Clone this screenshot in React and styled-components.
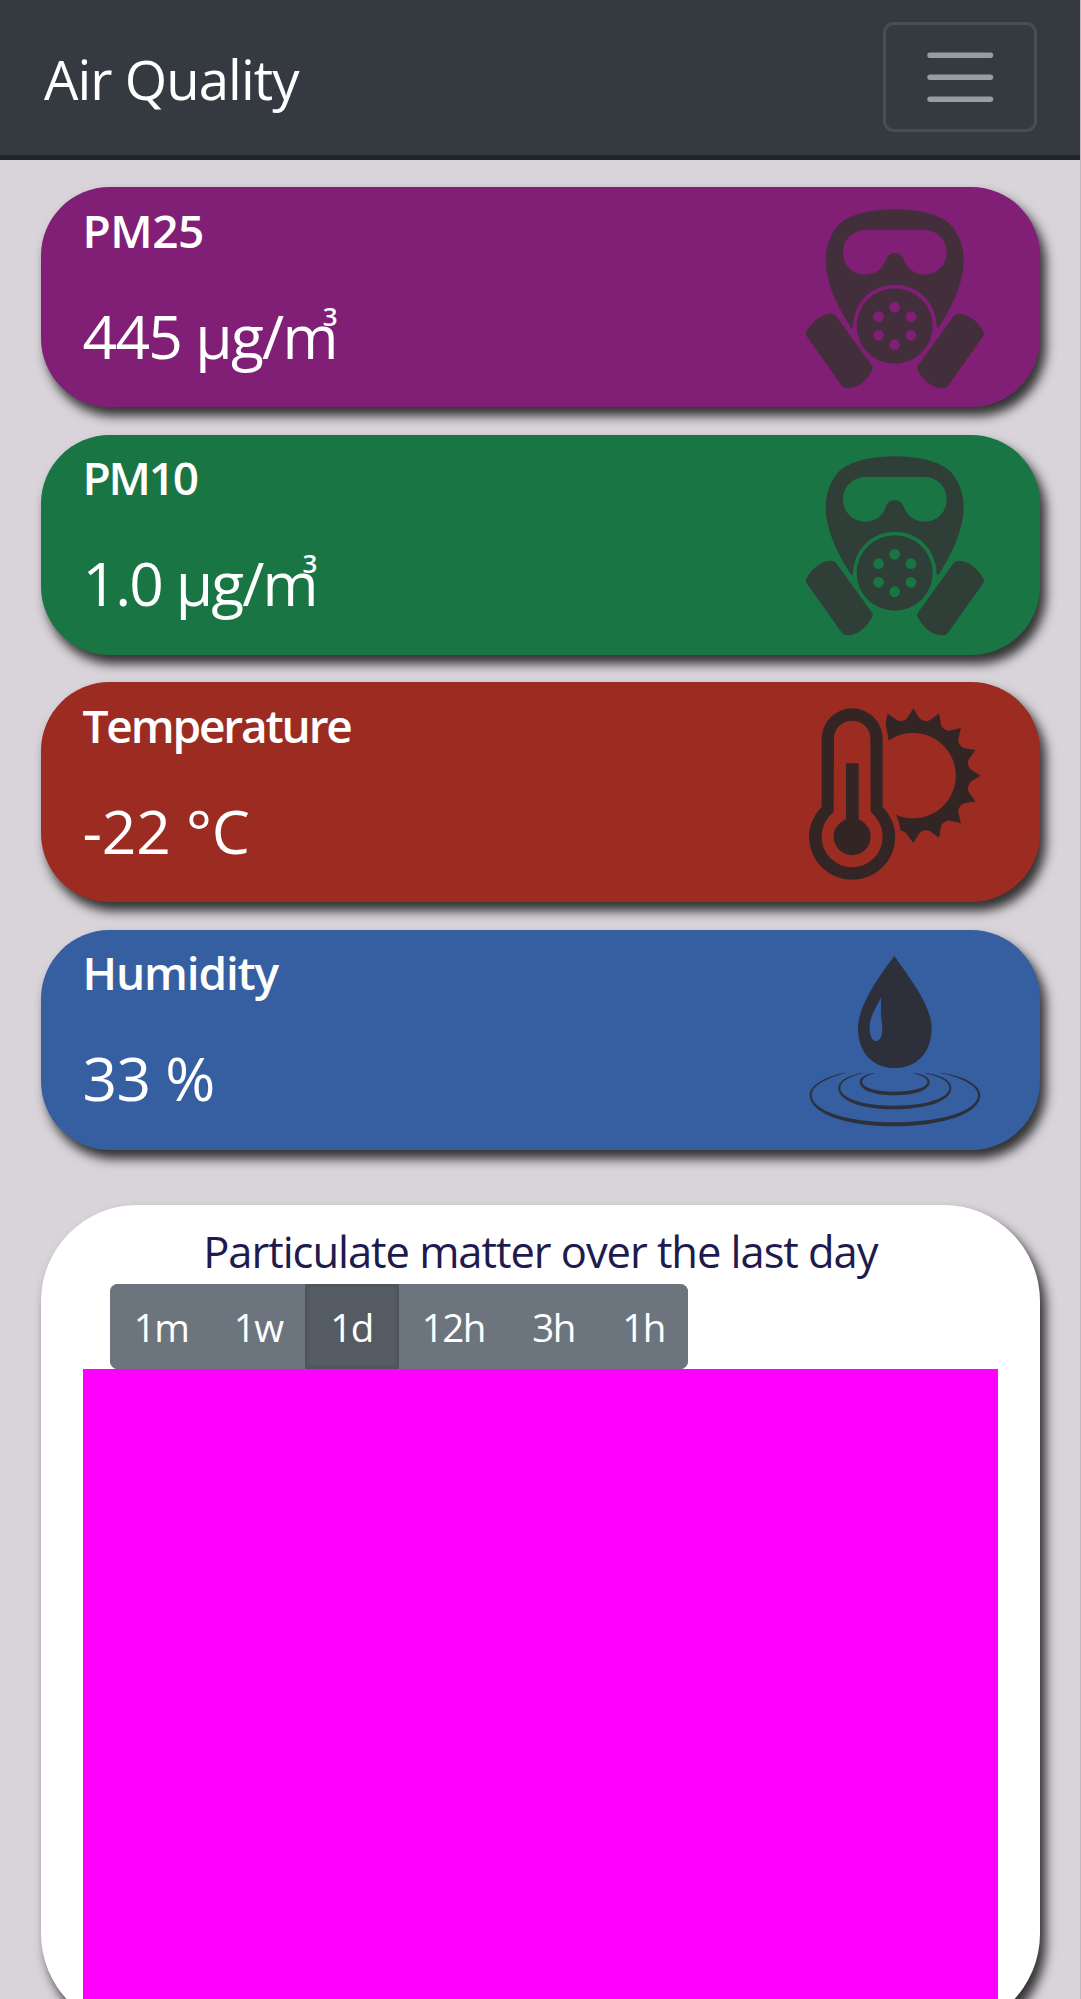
import React from "react";
import styled, { createGlobalStyle } from "styled-components";

const GlobalStyle = createGlobalStyle`
  *, *::before, *::after { box-sizing: border-box; }
  html, body { margin: 0; padding: 0; }
  body {
    background: #d9d4da;
    font-family: "Open Sans", "Noto Sans", sans-serif;
    overflow: hidden;
  }
`;

const Page = styled.div`
  height: 1999px;
  overflow: hidden;
  background: #d9d4da;
  border-right: 1px solid #bdb9be;
`;

const Navbar = styled.header`
  display: flex;
  align-items: center;
  justify-content: space-between;
  height: 159.5px;
  padding: 0 43.5px 0 44px;
  background: #343a40;
  border-bottom: 5.5px solid #212529;
`;

const Brand = styled.div`
  color: #fff;
  font-size: 54.5px;
  line-height: 82px;
  letter-spacing: ${(p) => p.$tracking}px;
  white-space: nowrap;
  padding-top: 3px;
`;

const Toggler = styled.button`
  display: flex;
  align-items: center;
  justify-content: center;
  width: 154px;
  height: 110px;
  padding: 0 0 0 1px;
  background: transparent;
  border: 3px solid rgba(255, 255, 255, 0.1);
  border-radius: 11px;
`;

const Content = styled.main`
  display: flex;
  flex-direction: column;
  padding: 27.5px 40.5px 0 41.25px;
`;

const Readings = styled.section`
  display: flex;
  flex-direction: column;
  gap: 27.5px;
`;

const ReadingCard = styled.article`
  display: flex;
  justify-content: space-between;
  height: 220px;
  padding: 0 54.75px 0 41.25px;
  color: #fff;
  background: ${(p) => p.$bg};
  border-radius: 68.75px;
  box-shadow: 5.5px 8.25px 11px #333;
`;

const ReadingText = styled.div`
  display: flex;
  flex-direction: column;
  gap: 38px;
  padding-top: 14.5px;
  white-space: nowrap;
`;

const Label = styled.div`
  font-size: 46px;
  font-weight: 600;
  line-height: 56px;
  letter-spacing: ${(p) => p.$tracking}px;
`;

const Value = styled.div`
  font-size: 60.5px;
  line-height: 80px;
  letter-spacing: ${(p) => p.$tracking}px;
`;

const Cube = styled.span`
  display: inline-block;
  margin-left: -14px;
  font-size: 26px;
  font-weight: 600;
  line-height: 26px;
  letter-spacing: 0;
  transform: translateY(-33px);
`;

const Icon = styled.svg`
  width: 180px;
  height: 180px;
  margin-top: 21.5px;
  fill: ${(p) => p.$color};
`;

const ChartCard = styled.section`
  height: 825px;
  margin-top: 55px;
  padding: 14.5px 41.25px 0;
  background: #fff;
  border-radius: 96.25px;
  box-shadow: 5.5px 8.25px 11px #333;
`;

const ChartTitle = styled.h2`
  margin: 0 0 -1px;
  color: #201a4d;
  font-size: 43.5px;
  font-weight: 400;
  line-height: 66px;
  letter-spacing: ${(p) => p.$tracking}px;
  text-align: center;
  white-space: nowrap;
`;

const RangeGroup = styled.div`
  display: flex;
  width: 578px;
  height: 85.25px;
  margin-left: 27.5px;
  border-radius: 8px;
  overflow: hidden;
`;

const RangeButton = styled.button`
  width: ${(p) => p.$width}px;
  padding: 1px 0 0;
  color: #fff;
  font-family: inherit;
  font-size: 38.5px;
  line-height: 78px;
  letter-spacing: ${(p) => p.$tracking}px;
  background: ${(p) => (p.$active ? "#545b62" : "#6c757d")};
  border: 3px solid ${(p) => (p.$active ? "#4e555b" : "#6c757d")};
`;

const Plot = styled.div`
  height: 660px;
  background: #f0f;
`;

const CX = 401;
const CY = 315;
const polar = (r, deg) => {
  const a = (deg * Math.PI) / 180;
  return `${(CX + r * Math.sin(a)).toFixed(1)} ${(CY - r * Math.cos(a)).toFixed(1)}`;
};

const sunRays = () => {
  let d = `M318 157L${polar(202, -22.5)}`;
  for (let a = -22.5; a < 180; a += 22.5) {
    d += `L${polar(175, a + 5.6)}Q${polar(167, a + 7.8)} ${polar(168, a + 11.25)}`;
    d += `Q${polar(167, a + 14.7)} ${polar(175, a + 16.9)}L${polar(202, a + 22.5)}`;
  }
  return `${d}L381 490Q373 480 363 480Q360 455 349 432A128 128 0 1 0 327 210C325 190 318 170 318 157Z`;
};

const CANISTER =
  "M169 406L278 558Q281 563 277 570C262 600 235 624 203 624Q192 624 187 617L80 466Q75 461 80 454C95 425 125 400 152 400Q164 400 169 406Z";

const HOLES = [[345, 381], [297, 409], [394, 409], [297, 465], [394, 465], [345, 493]];

const holePath = HOLES.map(([x, y]) => `M${x - 16} ${y}a16 16 0 1 0 32 0a16 16 0 1 0 -32 0Z`).join("");

const MaskIcon = ({ color }) => (
  <Icon viewBox="76 86 540 540" $color={color}>
    <path
      fillRule="evenodd"
      d="M220 438C220 445 216 445 212 439C165 365 138 300 138 238C138 195 155 155 180 130C220 97 285 87 345 87C405 87 470 97 510 130C535 155 552 195 552 238C552 300 525 365 479 439C475 445 471 445 471 438A125.5 125 0 0 0 220 438ZM257 149H435C472 149 501 178 501 216C501 254 472 283 435 283C408 283 385 268 374 243C369 226 359 218 345 218C331 218 322 226 317 243C308 268 284 283 257 283C220 283 190 254 190 216C190 178 220 149 257 149Z"
    />
    <path fillRule="evenodd" d={`M231 437a114 113 0 1 0 228 0a114 113 0 1 0 -228 0Z${holePath}`} />
    <path d={CANISTER} />
    <path d={CANISTER} transform="translate(691.5 0) scale(-1 1)" />
  </Icon>
);

const TemperatureIcon = ({ color }) => (
  <Icon viewBox="76 100 540 540" $color={color}>
    <path
      fillRule="evenodd"
      d="M126 205A91.5 92 0 0 1 309 205V408C333 434 347 465 347 498A129.5 129.5 0 0 1 88 498C88 465 102 434 126 408ZM163 203A54.5 53 0 0 1 272 203L273 423C296 444 309 468 309 498A91.5 92 0 0 1 126 498C126 468 139 444 162 423Z"
    />
    <path d="M199 278H237V446C259 456 273 475 273 498A55.5 55.5 0 0 1 162 498C162 475 176 456 199 446Z" />
    <path d={sunRays()} />
  </Icon>
);

const HumidityIcon = ({ color }) => (
  <Icon viewBox="76 92 540 540" $color={color}>
    <path
      fillRule="evenodd"
      d="M344 107C383 163 456 255 456 322C456 400 408 443 345 443C283 443 235 400 235 322C235 255 305 158 344 107ZM305 231C303 260 303 285 306 303C312 340 303 362 290 362C277 362 269 345 270 318C272 285 290 260 305 231Z"
    />
    <path d="M197 457C130 470 90 497 90 524C90 580 200 618 340 618C490 618 602 580 602 524C602 497 560 468 485 457V459C555 474 595 500 595 524C595 570 490 606 340 606C200 606 96 570 96 524C96 500 135 474 197 459Z" />
    <path d="M248 457C200 467 176 482 176 503C176 543 250 567 340 567C440 567 515 543 515 503C515 482 490 465 437 457V459C485 470 509 485 509 503C509 535 435 556 340 556C255 556 182 535 182 503C182 485 205 470 248 459Z" />
    <path d="M285 457C255 462 240 472 240 485C240 510 285 525 342 525C405 525 450 510 450 485C450 472 435 462 402 457V459C432 467 443 476 443 485C443 502 400 514 342 514C290 514 248 502 248 485C248 476 258 466 285 459Z" />
  </Icon>
);

const READINGS = [
  { label: "PM25", value: "445 µg/m", cubed: true, bg: "#801f75", ink: "#432e3c", icon: MaskIcon, lt: -0.5, vt: -1.7 },
  { label: "PM10", value: "1.0 µg/m", cubed: true, bg: "#1a7545", ink: "#2f3f37", icon: MaskIcon, lt: -2.2, vt: -1.9 },
  { label: "Temperature", value: "-22 °C", bg: "#9c2c22", ink: "#332523", icon: TemperatureIcon, lt: -2.15, vt: -0.2 },
  { label: "Humidity", value: "33 %", bg: "#365fa1", ink: "#2d303a", icon: HumidityIcon, lt: -1.15, vt: -0.7 },
];

const RANGES = [
  { label: "1m", width: 102 },
  { label: "1w", width: 92.5 },
  { label: "1d", width: 94, active: true },
  { label: "12h", width: 109.5 },
  { label: "3h", width: 91 },
  { label: "1h", width: 89 },
];

export default function App() {
  return (
    <>
      <GlobalStyle />
      <Page>
        <Navbar>
          <Brand $tracking={-0.95}>Air Quality</Brand>
          <Toggler aria-label="Toggle navigation">
            <svg width="82.5" height="82.5" viewBox="0 0 30 30" fill="none">
              <path
                d="M4 7h22M4 15h22M4 23h22"
                stroke="rgba(255,255,255,0.5)"
                strokeWidth="2"
                strokeLinecap="round"
                strokeMiterlimit="10"
              />
            </svg>
          </Toggler>
        </Navbar>
        <Content>
          <Readings>
            {READINGS.map(({ label, value, cubed, bg, ink, icon: Glyph, lt, vt }) => (
              <ReadingCard key={label} $bg={bg}>
                <ReadingText>
                  <Label $tracking={lt}>{label}</Label>
                  <Value $tracking={vt}>
                    {value}
                    {cubed && <Cube>3</Cube>}
                  </Value>
                </ReadingText>
                <Glyph color={ink} />
              </ReadingCard>
            ))}
          </Readings>
          <ChartCard>
            <ChartTitle $tracking={-1.05}>Particulate matter over the last day</ChartTitle>
            <RangeGroup>
              {RANGES.map(({ label, width, active }) => (
                <RangeButton key={label} $width={width} $active={active} $tracking={-1.5}>
                  {label}
                </RangeButton>
              ))}
            </RangeGroup>
            <Plot />
          </ChartCard>
        </Content>
      </Page>
    </>
  );
}
